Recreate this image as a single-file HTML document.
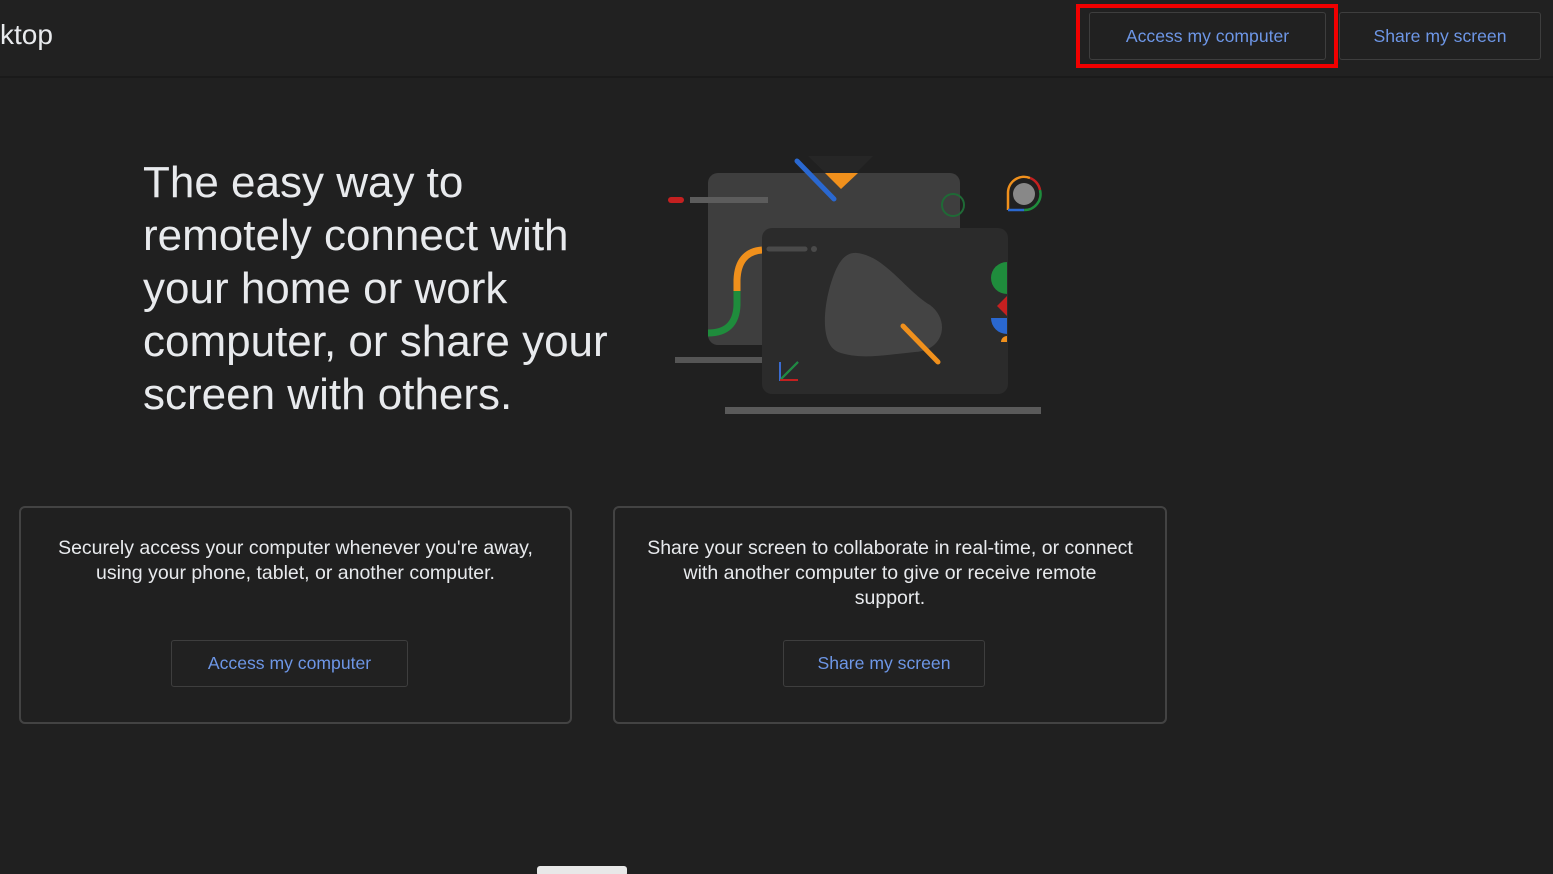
<!DOCTYPE html>
<html><head><meta charset="utf-8"><style>
*{box-sizing:border-box;margin:0;padding:0}
body{width:1553px;height:874px;background:#202020;font-family:"Liberation Sans",sans-serif;color:#e8eaed;position:relative;overflow:hidden}
.hdr{position:absolute;left:0;top:0;width:1553px;height:78px;border-bottom:2px solid #1a1a1a;background:#212121}
.title{position:absolute;left:0;top:19px;font-size:28px;color:#e8eaed}
.btn{position:absolute;border:1px solid #3e3e3e;border-radius:3px;color:#6d96e6;font-size:17.6px;display:flex;align-items:center;justify-content:center;background:#212121}
.red{position:absolute;left:1076px;top:4px;width:262px;height:64px;border:4px solid #f10000}
h1{position:absolute;left:143px;top:156px;font-weight:normal;font-size:44px;line-height:53px;color:#e8eaed}
.card{position:absolute;border:2px solid #434343;border-radius:6px;text-align:center;font-size:19.5px;line-height:25px;color:#e8eaed}
</style></head><body>
<div class="hdr"><div class="title">ktop</div></div>
<div class="btn" style="left:1089px;top:12px;width:237px;height:48px">Access my computer</div>
<div class="btn" style="left:1339px;top:12px;width:202px;height:48px">Share my screen</div>
<div class="red"></div>
<h1>The easy way to<br>remotely connect with<br>your home or work<br>computer, or share your<br>screen with others.</h1>
<svg style="position:absolute;left:0;top:0" width="1553" height="874">
<rect x="708" y="173" width="252" height="172" rx="10" fill="#3e3e3e"/>
<rect x="675" y="357" width="90" height="6" fill="#555"/>
<polygon points="808,156 873,156 841,188" fill="#262626"/>
<polygon points="825,173 858,173 841,189" fill="#f0901c"/>
<line x1="797" y1="161" x2="834" y2="199" stroke="#2a68d0" stroke-width="5" stroke-linecap="round"/>
<line x1="671" y1="200" x2="681" y2="200" stroke="#c42020" stroke-width="6" stroke-linecap="round"/>
<line x1="690" y1="200" x2="768" y2="200" stroke="#5c5c5c" stroke-width="6"/>
<path d="M762 250 Q738 252 737 280 L737 291" stroke="#f0901c" stroke-width="7" fill="none"/>
<path d="M737 291 L737 305 Q736 333 708 333" stroke="#1f8c3c" stroke-width="7" fill="none"/>
<circle cx="953" cy="205" r="11" fill="none" stroke="#1f6a36" stroke-width="2"/>
<rect x="762" y="228" width="246" height="166" rx="10" fill="#2b2b2b"/>
<line x1="769" y1="249" x2="805" y2="249" stroke="#4a4a4a" stroke-width="5" stroke-linecap="round"/>
<circle cx="814" cy="249" r="3" fill="#4a4a4a"/>
<path d="M857 253 C885 256 905 290 930 305 C950 320 945 350 915 352 C885 355 860 360 838 352 C818 343 825 300 832 280 C838 262 845 252 857 253Z" fill="#444"/>
<line x1="903" y1="326" x2="938" y2="362" stroke="#f0901c" stroke-width="5" stroke-linecap="round"/>
<path d="M780 362 L780 380 L798 380 M780 380 L798 362" stroke="#3a6bd0" stroke-width="2" fill="none"/>
<line x1="780" y1="380" x2="798" y2="380" stroke="#c42020" stroke-width="2"/>
<line x1="781" y1="379" x2="798" y2="362" stroke="#1f8c3c" stroke-width="2"/>
<rect x="725" y="407" width="316" height="7" fill="#5a5a5a"/>
<path d="M1007 262 A16 16 0 0 0 1007 294Z" fill="#1f8c3c"/>
<path d="M1007 296 L997 306 L1007 316Z" fill="#c42020"/>
<path d="M991 318 L1007 318 L1007 334 A16 16 0 0 1 991 318Z" fill="#2a68d0"/>
<path d="M1007 336 A6 6 0 0 0 1001 342 L1007 342Z" fill="#f0901c"/>
<circle cx="1024" cy="194" r="11" fill="#888"/>
<path d="M1008 210 L1008 193 A16 16 0 0 1 1030 178" stroke="#f0901c" stroke-width="2.5" fill="none"/>
<path d="M1030 178 A16 16 0 0 1 1040 190" stroke="#c42020" stroke-width="2.5" fill="none"/>
<path d="M1040 190 A16 16 0 0 1 1024 210" stroke="#1f8c3c" stroke-width="2.5" fill="none"/>
<path d="M1024 210 L1008 210" stroke="#2a68d0" stroke-width="2.5" fill="none"/>
<rect x="537" y="866" width="90" height="10" rx="3" fill="#e8e8e8"/>
</svg>
<div class="card" style="left:19px;top:506px;width:553px;height:218px;padding-top:28px">Securely access your computer whenever you're away,<br>using your phone, tablet, or another computer.</div>
<div class="btn" style="left:171px;top:640px;width:237px;height:47px">Access my computer</div>
<div class="card" style="left:613px;top:506px;width:554px;height:218px;padding-top:28px">Share your screen to collaborate in real-time, or connect<br>with another computer to give or receive remote<br>support.</div>
<div class="btn" style="left:783px;top:640px;width:202px;height:47px">Share my screen</div>
</body></html>
